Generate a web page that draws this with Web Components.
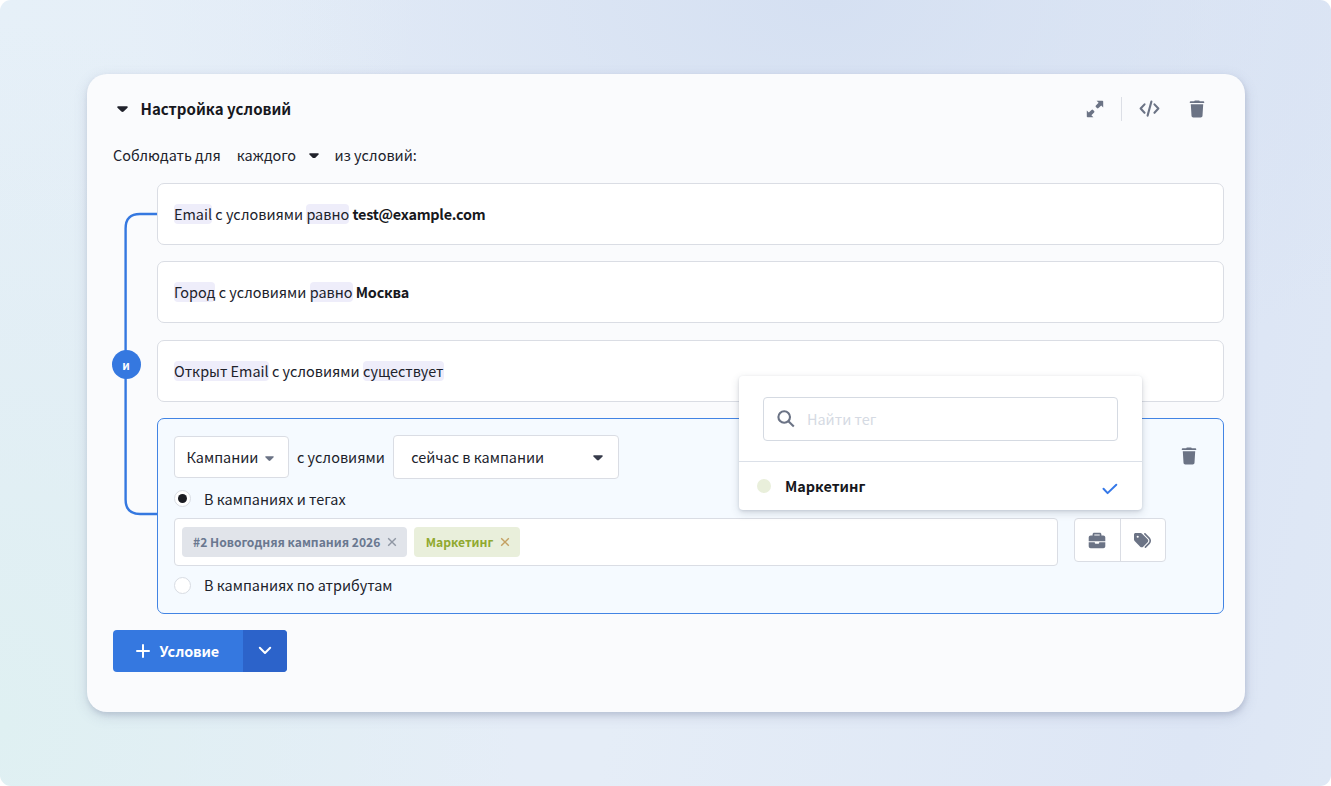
<!DOCTYPE html>
<html lang="ru">
<head>
<meta charset="utf-8">
<title>Настройка условий</title>
<style>
    html { background: #fff; }
    body {
        margin: 0;
        width: 1331px;
        height: 786px;
        overflow: hidden;
        font: 14.43px/20px "Noto Sans CJK SC", "Noto Sans", sans-serif;
        color: #20222b;
        --blue: #3578e0;
        --line: #dadde4;
        --icon: #6b7385;
    }
    b { letter-spacing: -0.25px; color: #17181d; }
</style>
</head>
<body>
<condition-page>
    <condition-panel>
        <span slot="title">Настройка условий</span>
        <condition-row>
            <mark-word>Email</mark-word> <span>с условиями</span> <mark-word>равно</mark-word> <b>test@example.com</b>
        </condition-row>
        <condition-row>
            <mark-word>Город</mark-word> <span>с условиями</span> <mark-word>равно</mark-word> <b>Москва</b>
        </condition-row>
        <condition-row>
            <mark-word>Открыт Email</mark-word> <span>с условиями</span> <mark-word>существует</mark-word>
        </condition-row>
        <condition-editor>
            <tag-chip slot="tags">#2 Новогодняя кампания 2026</tag-chip>
            <tag-chip slot="tags" color="green">Маркетинг</tag-chip>
            <tag-popup slot="popup" placeholder="Найти тег">Маркетинг</tag-popup>
        </condition-editor>
        <split-button slot="footer">Условие</split-button>
    </condition-panel>
</condition-page>

<script>
const ICONS = {
    caret: ['0 0 12 7', '<path d="M1.2.3h9.6c.9 0 1.3.9.7 1.5L7.2 6.1c-.7.7-1.7.7-2.4 0L.5 1.8C-.1 1.2.3.3 1.2.3z"/>'],
    expand: ['0 0 18 18', '<path d="M10.6.8h5.8c.5 0 .8.3.8.8v5.8l-2-2-2.7 2.7q-.8.8-1.6 0l-1-1q-.8-.8 0-1.600l2.700-2.700zM7.400 17.200H1.600c-.5 0-.8-.3-.8-.8v-5.800l2 2 2.700-2.700q.8-.8 1.600 0l1 1q.8.8 0 1.600l-2.700 2.700z"/>'],
    code: ['0 0 22 18', '<path d="M5.8 4.6 1.7 9l4.1 4.4M16.2 4.6 20.3 9l-4.1 4.4M13 1.6 9 16.4" fill="none" stroke="currentColor" stroke-width="2.2" stroke-linecap="round" stroke-linejoin="round"/>'],
    trash: ['0 0 16 18', '<path d="M5.2 1.2 5.8.6h4.4l.6.6h3.6c.5 0 .8.3.8.8v.9H.8V2c0-.5.3-.8.8-.8zM1.8 4.3h12.4l-.7 11.5c-.1 1-.8 1.7-1.8 1.7H4.3c-1 0-1.7-.7-1.8-1.7z"/>'],
    search: ['0 0 18 18', '<g fill="none" stroke="currentColor" stroke-width="2.1"><circle cx="7.2" cy="7" r="5.8"/><path d="m11.4 11.2 5.4 5.2"/></g>'],
    check: ['0 0 16 12', '<path d="m1.5 5.8 4.1 4.3 8.7-8.4" fill="none" stroke="currentColor" stroke-width="2" stroke-linecap="round" stroke-linejoin="round"/>'],
    cross: ['0 0 10 10', '<path d="m1.2 1.2 7.6 7.6M8.8 1.2 1.2 8.8" fill="none" stroke="currentColor" stroke-width="1.4"/>'],
    plus: ['0 0 14 14', '<path d="M7 1v12M1 7h12" fill="none" stroke="currentColor" stroke-width="2" stroke-linecap="round"/>'],
    chevron: ['0 0 14 10', '<path d="m1.8 1.8 5.2 5.2 5.2-5.2" fill="none" stroke="currentColor" stroke-width="2" stroke-linecap="round" stroke-linejoin="round"/>'],
    briefcase: ['0 0 18 17', '<path fill-rule="evenodd" d="M4.6 3.6V2.4C4.6 1.4 5.3.7 6.3.7h5.4c1 0 1.7.7 1.7 1.7v1.2h1.9c1.1 0 2 .9 2 2v3.6H.7V5.6c0-1.1.9-2 2-2zM6.3 3.6h5.4V2.4H6.3zM.7 10.3h6.1v.7c0 .5.3.8.8.8h2.8c.5 0 .8-.3.8-.8v-.7h6.1v4c0 1.1-.9 2-2 2H2.7c-1.1 0-2-.9-2-2z"/>'],
    tags: ['0 0 512 480', '<path fill-rule="evenodd" d="M345 39.1 472.8 168.4c52.4 53 52.4 138.2 0 191.2L360.8 472.9c-9.3 9.4-24.5 9.5-33.9.2s-9.5-24.5-.2-33.9L438.6 325.9c33.9-34.3 33.9-89.4 0-123.7L310.9 72.9c-9.3-9.4-9.2-24.6.2-33.9s24.6-9.2 33.9.2zM0 229.5V80C0 53.5 21.5 32 48 32H197.5c17 0 33.3 6.7 45.3 18.7l168 168c25 25 25 65.5 0 90.5L277.3 442.7c-25 25-65.5 25-90.5 0l-168-168C6.7 262.7 0 246.5 0 229.5zM144 144a32 32 0 1 0-64 0 32 32 0 1 0 64 0z"/>'],
};

class BaseElement extends HTMLElement {
    constructor() {
        super();
        this.attachShadow({ mode: 'open' });
        this.shadowRoot.innerHTML = this.template();
    }
}

class UiIcon extends HTMLElement {
    constructor() {
        super();
        this.attachShadow({ mode: 'open' });
    }

    connectedCallback() {
        const [box, body] = ICONS[this.getAttribute('name')];
        const [, , w, h] = box.split(' ');
        const width = Number(this.getAttribute('width') || w);
        this.shadowRoot.innerHTML = `
            <style>
                :host { display: inline-flex; flex: none; }
                svg { display: block; fill: currentColor; }
            </style>
            <svg viewBox="${box}" width="${width}" height="${width * h / w}">${body}</svg>
        `;
    }
}

class ConditionPage extends BaseElement {
    template() {
        return `
            <style>
                :host {
                    display: block;
                    box-sizing: border-box;
                    width: 1331px;
                    height: 786px;
                    padding: 74px 86px 74px 87px;
                    border-radius: 11px;
                    background:
                        radial-gradient(ellipse 520px 700px at 0 92%, #dff0f2 0, #dff0f200 100%),
                        radial-gradient(ellipse 420px 360px at 0 0, #e6f0f8 0, #e6f0f800 100%),
                        radial-gradient(ellipse 700px 420px at 62% 0, #d5e0f2 0, #d5e0f200 100%),
                        linear-gradient(100deg, #e5edf8 0, #e5edf7 50%, #dde6f5 90%, #dfe8f5 100%);
                }
            </style>
            <slot></slot>
        `;
    }
}

class ConditionPanel extends BaseElement {
    template() {
        return `
            <style>
                :host {
                    display: flex;
                    flex-direction: column;
                    box-sizing: border-box;
                    height: 638px;
                    padding: 19px 21.5px 0 26px;
                    border-radius: 20px;
                    background: #fafbfd;
                    box-shadow: 0 4px 14px #62709233, 1px 3px 5px #62709233;
                }
                header { display: flex; align-items: center; height: 31px; }
                header ui-icon { color: var(--icon); }
                header .caret { margin: 2px 0 0 4px; color: #20222b; }
                .title { flex: 1; margin-left: 12.5px; font-size: 15.05px; font-weight: 700; color: #17181d; }
                .divider { width: 1px; height: 24px; margin: 0 17px; background: #dcdfe6; }
                .code { margin-right: 29px; }
                .trash { margin-right: 18.5px; }
                .scope { display: flex; align-items: center; height: 20px; margin-top: 20.5px; }
                .scope ui-icon { margin-top: 2px; }
                .scope .each { margin: 0 13px 0 16px; }
                .scope .to { margin-left: 15.5px; }
                .list { display: flex; margin-top: 18.5px; }
                .rail { position: relative; width: 44px; flex: none; }
                .rail svg { display: block; overflow: visible; }
                .and {
                    position: absolute;
                    left: -1.5px;
                    top: 166.5px;
                    width: 29px;
                    height: 29px;
                    border-radius: 50%;
                    background: var(--blue);
                    color: #fff;
                    font-size: 11.5px;
                    font-weight: 700;
                    line-height: 30px;
                    text-align: center;
                }
                .rows { flex: 1; display: flex; flex-direction: column; gap: 16.4px; }
                footer { display: flex; margin-top: 16.5px; }
            </style>
            <header>
                <ui-icon class="caret" name="caret" width="11"></ui-icon>
                <div class="title"><slot name="title"></slot></div>
                <ui-icon name="expand"></ui-icon>
                <div class="divider"></div>
                <ui-icon class="code" name="code" width="21"></ui-icon>
                <ui-icon class="trash" name="trash"></ui-icon>
            </header>
            <div class="scope">
                <span>Соблюдать для</span>
                <span class="each">каждого</span>
                <ui-icon name="caret" width="10"></ui-icon>
                <span class="to">из условий:</span>
            </div>
            <div class="list">
                <div class="rail">
                    <svg width="44" height="430" fill="none" stroke="#3578e0" stroke-width="2.4">
                        <path d="M44 31H27Q12.6 31 12.6 45.5V316.5Q12.6 331 27 331H44"/>
                    </svg>
                    <div class="and">и</div>
                </div>
                <div class="rows"><slot></slot></div>
            </div>
            <footer><slot name="footer"></slot></footer>
        `;
    }
}

class ConditionRow extends BaseElement {
    template() {
        return `
            <style>
                :host {
                    display: flex;
                    align-items: center;
                    gap: 3.3px;
                    box-sizing: border-box;
                    height: 62px;
                    padding-left: 16px;
                    border: 1px solid var(--line);
                    border-radius: 7px;
                    background: #fff;
                }
            </style>
            <slot></slot>
        `;
    }
}

class MarkWord extends BaseElement {
    template() {
        return `
            <style>
                :host {
                    display: inline-block;
                    border-radius: 4px;
                    background: #eeedfa;
                }
            </style>
            <slot></slot>
        `;
    }
}

class UiSelect extends BaseElement {
    template() {
        return `
            <style>
                :host {
                    display: flex;
                    align-items: center;
                    justify-content: space-between;
                    box-sizing: border-box;
                    border: 1px solid var(--line);
                    border-radius: 4px;
                    background: #fff;
                }
                ui-icon { margin-top: 2px; color: var(--caret, #363b4a); }
            </style>
            <span><slot></slot></span>
            <ui-icon name="caret" width="${this.getAttribute('caret') || 10}"></ui-icon>
        `;
    }
}

class RadioOption extends BaseElement {
    template() {
        return `
            <style>
                :host { display: flex; align-items: center; gap: 13px; height: 20px; }
                i {
                    display: grid;
                    place-items: center;
                    box-sizing: border-box;
                    width: 17px;
                    height: 17px;
                    border: 1px solid #d8dce3;
                    border-radius: 50%;
                    background: #fff;
                }
                :host([checked]) i::before {
                    content: "";
                    width: 9px;
                    height: 9px;
                    border-radius: 50%;
                    background: #1b1c22;
                }
            </style>
            <i></i><span><slot></slot></span>
        `;
    }
}

class TagChip extends BaseElement {
    template() {
        return `
            <style>
                :host {
                    display: flex;
                    align-items: center;
                    gap: 6.5px;
                    box-sizing: border-box;
                    height: 30px;
                    padding: 0 10.5px 0 11px;
                    border-radius: 4px;
                    background: #e1e4ea;
                    color: #6a7890;
                    font-size: 12.1px;
                    font-weight: 700;
                    white-space: nowrap;
                }
                :host([color="green"]) { padding-left: 11.5px; background: #e9efdb; color: #90a92f; }
                ui-icon { color: #8f96a3; }
                :host([color="green"]) ui-icon { color: #c4a062; }
            </style>
            <span><slot></slot></span>
            <ui-icon name="cross"></ui-icon>
        `;
    }
}

class ConditionEditor extends BaseElement {
    template() {
        return `
            <style>
                :host {
                    position: relative;
                    display: block;
                    box-sizing: border-box;
                    height: 195.4px;
                    padding: 16px 16px 0;
                    border: 1px solid #4284e4;
                    border-radius: 7px;
                    background: #f5faff;
                }
                .top { display: flex; align-items: center; height: 44px; }
                .kind { width: 115px; height: 42px; padding: 0 14.5px 0 11.5px; --caret: #6b7385; }
                .with { margin: 0 8px; }
                .state { width: 226px; height: 44px; padding: 0 15px 0 17.5px; }
                .top > ui-icon { margin: 0 10px 3px auto; color: var(--icon); }
                .first { margin-top: 9.4px; }
                .tags { display: flex; gap: 16px; margin-top: 9.6px; }
                .field {
                    display: flex;
                    align-items: center;
                    gap: 7px;
                    box-sizing: border-box;
                    width: 884px;
                    height: 47.5px;
                    padding: 0 7px;
                    border: 1px solid var(--line);
                    border-radius: 4px;
                    background: #fff;
                }
                .group {
                    display: flex;
                    box-sizing: border-box;
                    width: 92px;
                    height: 44px;
                    border: 1px solid var(--line);
                    border-radius: 4px;
                    background: #fff;
                    color: var(--icon);
                }
                .group span { flex: 1; display: grid; place-items: center; }
                .group span + span { border-left: 1px solid var(--line); }
                .last { margin-top: 9.5px; }
            </style>
            <div class="top">
                <ui-select class="kind" caret="9">Кампании</ui-select>
                <span class="with">с условиями</span>
                <ui-select class="state">сейчас в кампании</ui-select>
                <ui-icon name="trash"></ui-icon>
            </div>
            <radio-option class="first" checked>В кампаниях и тегах</radio-option>
            <div class="tags">
                <div class="field"><slot name="tags"></slot></div>
                <div class="group">
                    <span><ui-icon name="briefcase"></ui-icon></span>
                    <span><ui-icon name="tags" width="17"></ui-icon></span>
                </div>
            </div>
            <radio-option class="last">В кампаниях по атрибутам</radio-option>
            <slot name="popup"></slot>
        `;
    }
}

class TagPopup extends BaseElement {
    template() {
        return `
            <style>
                :host {
                    position: absolute;
                    left: 580.5px;
                    top: -43px;
                    box-sizing: border-box;
                    width: 403.5px;
                    height: 134px;
                    border-radius: 4px;
                    background: #fff;
                    box-shadow: 0 3px 9px #3a465f2e, 0 1px 3px #3a465f26;
                }
                .search { padding: 21px 24.5px 20px; border-bottom: 1px solid #dbe0e8; }
                .input {
                    display: flex;
                    align-items: center;
                    gap: 12px;
                    box-sizing: border-box;
                    height: 43.5px;
                    padding-left: 13px;
                    border: 1px solid #d5dae2;
                    border-radius: 4px;
                    color: #d5dae3;
                }
                .input ui-icon { color: var(--icon); }
                .item { display: flex; align-items: center; height: 49px; padding: 0 24px 0 18.5px; }
                .dot { width: 14px; height: 14px; border-radius: 50%; background: #e9efdb; }
                .name { flex: 1; margin-left: 14px; font-weight: 700; color: #17181d; }
                .item ui-icon { color: #3578e8; margin-top: 6px; }
            </style>
            <div class="search">
                <div class="input"><ui-icon name="search"></ui-icon><span class="hint"></span></div>
            </div>
            <div class="item">
                <i class="dot"></i>
                <span class="name"><slot></slot></span>
                <ui-icon name="check"></ui-icon>
            </div>
        `;
    }

    connectedCallback() {
        this.shadowRoot.querySelector('.hint').textContent = this.getAttribute('placeholder') || '';
    }
}

class SplitButton extends BaseElement {
    template() {
        return `
            <style>
                :host {
                    display: flex;
                    width: 174px;
                    height: 42px;
                    border-radius: 4px;
                    overflow: hidden;
                    background: var(--blue);
                    color: #fff;
                    font-weight: 700;
                }
                .main {
                    display: flex;
                    align-items: center;
                    gap: 9.5px;
                    box-sizing: border-box;
                    width: 130px;
                    padding-left: 23px;
                    letter-spacing: -0.15px;
                }
                .more { flex: 1; display: grid; place-items: center; background: #2c63ca; }
            </style>
            <div class="main"><ui-icon name="plus"></ui-icon><span><slot></slot></span></div>
            <div class="more"><ui-icon name="chevron"></ui-icon></div>
        `;
    }
}

customElements.define('ui-icon', UiIcon);
customElements.define('condition-page', ConditionPage);
customElements.define('condition-panel', ConditionPanel);
customElements.define('condition-row', ConditionRow);
customElements.define('mark-word', MarkWord);
customElements.define('ui-select', UiSelect);
customElements.define('radio-option', RadioOption);
customElements.define('tag-chip', TagChip);
customElements.define('condition-editor', ConditionEditor);
customElements.define('tag-popup', TagPopup);
customElements.define('split-button', SplitButton);
</script>
</body>
</html>
